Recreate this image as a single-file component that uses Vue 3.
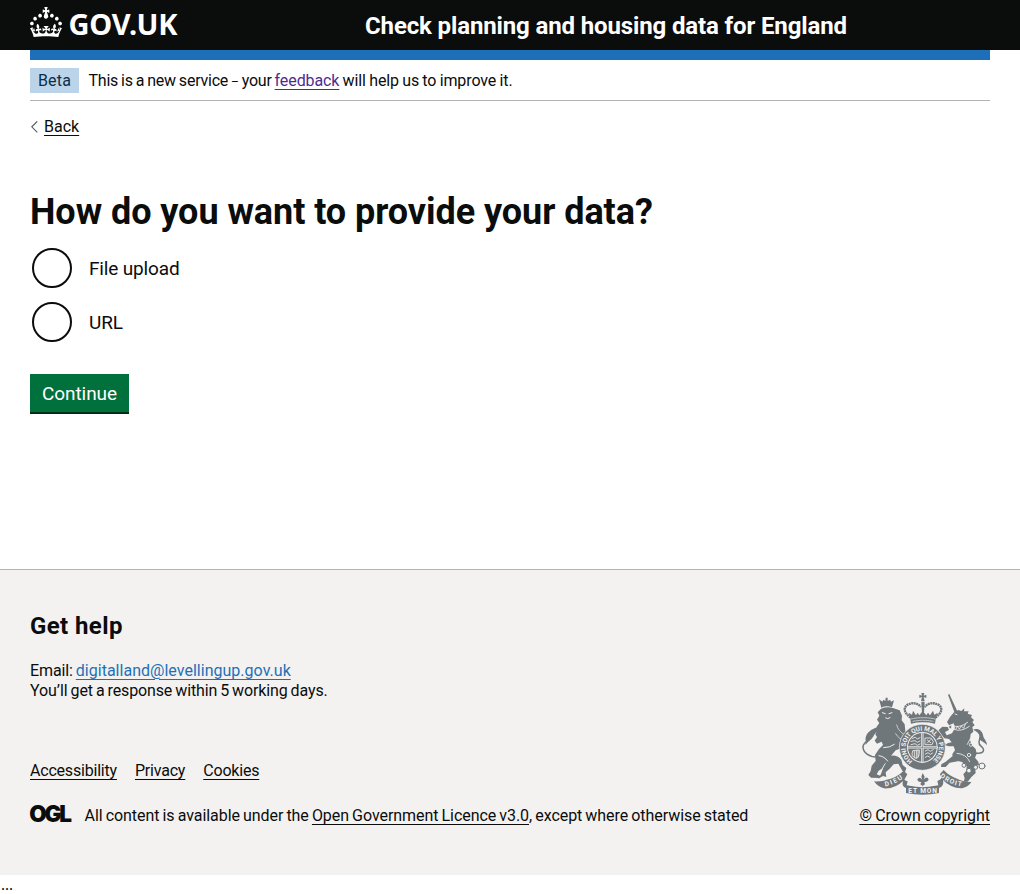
<script setup>
const links = ['Accessibility', 'Privacy', 'Cookies']
const options = ['File upload', 'URL']
</script>

<template>
  <div class="page">
    <header class="header">
      <div class="container header-inner">
        <a class="logo" aria-label="GOV.UK">
          <svg class="crown" viewBox="0 0 32 30" width="32" height="30" fill="#fff">
            <path d="M22.6 10.4c-1 .4-2-.1-2.4-1-.4-.9.1-2 1-2.4.9-.4 2 .1 2.4 1s-.1 2-1 2.4m4.9 3c-1 .4-2-.1-2.4-1-.4-.9.1-2 1-2.4.9-.4 2 .1 2.4 1s0 2-1 2.4m3.3 4.8c-1 .4-2-.1-2.4-1-.4-.9.1-2 1-2.4.9-.4 2 .1 2.4 1s-.1 2-1 2.4M17 4.7l2.3 1.2V2.5l-2.3.7-.2-.2.9-3h-3.4l.9 3-.2.2c-.1.1-2.3-.7-2.3-.7v3.4L15 4.7c.1.1.1.2.2.2l-1.3 4c-.1.2-.1.4-.1.6 0 1.1.8 2 1.9 2.2h.7c1-.2 1.9-1.1 1.9-2.1 0-.2 0-.4-.1-.6l-1.3-4c-.1-.2 0-.2.1-.3m-7.6 5.7c.9.4 2-.1 2.4-1 .4-.9-.1-2-1-2.4-.9-.4-2 .1-2.4 1s0 2 1 2.4m-5 3c.9.4 2-.1 2.4-1 .4-.9-.1-2-1-2.4-.9-.4-2 .1-2.4 1s.1 2 1 2.4m-3.2 4.8c.9.4 2-.1 2.4-1 .4-.9-.1-2-1-2.4-.9-.4-2 .1-2.4 1s0 2 1 2.4m14.8 11c4.4 0 8.6.3 12.3.8 1.1-4.5 2.4-7 3.7-8.8l-2.5-.9c.2 1.3.3 1.9 0 2.7-.4-.4-.8-1.1-1.1-2.3l-1.2 4c.7-.5 1.3-.8 2-.9-1.1 2.5-2.6 3.1-3.5 3-1.1-.2-1.7-1.2-1.5-2.1.3-1.2 1.5-1.5 2.1-.1 1.1-2.3-.8-3-2-2.3 1.9-1.9 2.1-3.5.6-5.6-2.1 1.6-2.1 3.2-1.2 5.5-1.2-1.4-3.2-.6-2.5 1.6.9-1.4 2.1-.5 1.9.8-.2 1.1-1.7 2.1-3.5 1.9-2.7-.2-2.9-2.1-2.9-3.6.7-.1 1.9.5 2.9 1.9l.4-4.3c-1.1 1.1-2.1 1.4-3.2 1.4.4-1.2 2.1-3 2.1-3h-5.4s1.7 1.9 2.1 3c-1.1 0-2.1-.2-3.2-1.4l.4 4.3c1-1.4 2.2-2 2.9-1.9-.1 1.5-.2 3.4-2.9 3.6-1.9.2-3.4-.8-3.5-1.9-.2-1.3 1-2.2 1.9-.8.7-2.3-1.2-3-2.5-1.6.9-2.2.9-3.9-1.2-5.5-1.5 2-1.3 3.7.6 5.6-1.2-.7-3.1 0-2 2.3.6-1.4 1.8-1.1 2.1.1.2.9-.3 1.9-1.5 2.1-.9.2-2.4-.5-3.5-3 .6 0 1.2.3 2 .9l-1.2-4c-.3 1.1-.7 1.9-1.1 2.3-.3-.8-.2-1.4 0-2.7l-2.9.9C1.3 23 2.6 25.5 3.7 30c3.7-.5 7.9-.8 12.3-.8" />
          </svg>
          <span class="logo-text">GOV.UK</span>
        </a>
        <a class="service">Check planning and housing data for England</a>
      </div>
    </header>

    <div class="container">
      <div class="phase">
        <strong class="tag">Beta</strong>
        <span class="phase-text"><span class="intro">This is a new service <span class="dash">–</span> your </span><a class="link visited">feedback</a> will help us to improve it.</span>
      </div>
      <a class="back">
        <svg width="8" height="12" viewBox="0 0 8 12" fill="none" stroke="#505a5f" stroke-width="1.1"><path d="M7.3 .3 1.8 5.8l5.5 5.5" /></svg>
        <span class="link">Back</span>
      </a>
      <main class="main">
        <h1>How do you want to provide your data?</h1>
        <div class="radios">
          <label v-for="o in options" :key="o" class="radio">
            <span class="ring"></span><span class="radio-label">{{ o }}</span>
          </label>
        </div>
        <button class="button">Continue</button>
      </main>
    </div>

    <footer class="footer">
      <div class="container">
        <h2>Get help</h2>
        <p class="help">Email: <a class="link blue">digitalland@levellingup.gov.uk</a><br>You’ll get a response within 5 working days.</p>
        <div class="meta">
          <div>
            <ul class="links">
              <li v-for="l in links" :key="l"><a class="link">{{ l }}</a></li>
            </ul>
            <div class="licence">
              <svg class="ogl" width="44" height="32" viewBox="-1 -6 44 32"><text x="-.8" y="17" textLength="42.8" lengthAdjust="spacing">OGL</text></svg>
              <span class="licence-text">All content is available under the <a class="link">Open Government Licence v3.0</a>, except where otherwise stated</span>
            </div>
          </div>
          <div class="copyright">
            <svg class="arms" width="125" height="102" viewBox="21 24 375 306" fill="#6f777b" stroke-linecap="round" stroke-linejoin="round">
              <defs>
                <path id="garter" d="M173 228A50 50 0 1 1 231 228" />
                <path id="left-motto" d="M91 304Q121 299 149 276" />
                <path id="right-motto" d="M254 275Q284 299 324 305" />
              </defs>
              <!-- lion: tail, crown, head and mane, body, legs -->
              <path fill="none" stroke="#6f777b" stroke-width="4.5" d="M64 216C43 216 24 203 24 185C25 168 46 168 51 153" />
              <path d="M32 168C29 148 44 136 60 129C77 122 83 131 75 137C66 136 61 143 57 151C51 164 40 168 32 180Z" />
              <path d="M72 43L82 50L85 44L91 48L92 38H98L98 48L105 44L108 50L117 46L111 67Q94 60 79 68Z" />
              <path d="M78 71Q98 63 116 70L134 76L141 92L140 106L149 118L151 138L165 158L156 168L157 182L141 184L133 192L122 196L110 210L100 226L88 238L80 251L71 257L65 268L77 273L74 279L48 278L40 270L47 258L50 242L62 228L60 210L72 192L84 180L80 170L66 176L59 167L66 156L61 148L67 136L64 127L73 114L66 104L73 92L68 82Z" />
              <path d="M104 213Q125 208 139 224L143 240L154 249L150 262L142 257L130 236L116 238L104 251L92 262L94 276L84 273L70 281L78 267L84 250Z" />
              <path fill="none" stroke="#f3f2f1" stroke-width="3" d="M82 83L91 86M102 86L111 83M92 99Q98 104 105 98M86 188Q106 188 118 178M72 212Q88 214 98 228" />
              <path fill="none" stroke="#f3f2f1" stroke-width="2" d="M125 120Q130 140 150 150M122 146Q132 164 150 166" />

              <!-- unicorn: horn, head and mane, body, legs, tail, chain -->
              <path d="M279 29L283 27L307 79L299 84Z" />
              <path d="M285 96L297 82L310 75L319 78L328 70L327 79L341 79L338 86L351 90L348 97L357 105L352 111L359 121L352 126L355 140L347 147L345 166L352 182L362 192L365 206L360 218L370 230L372 240L360 244L362 264L350 275L338 290L326 290L329 280L325 268L334 257L335 242L321 231L305 227L293 222L292 207L300 196L296 184L280 184L270 180L279 174L290 172L282 162L268 160L257 148L251 135L262 125L278 126L282 135L270 141L275 151L291 145L300 129L296 115L282 121L276 111Z" />
              <path d="M292 214L309 229L284 233L272 246L258 246L259 238L272 230Z" />
              <path d="M262 168L272 176L268 190L260 182Z" />
              <path fill="none" stroke="#6f777b" stroke-width="4.5" d="M358 203C378 208 390 201 384 190C379 182 371 182 372 171C373 161 381 149 373 140" />
              <path d="M354 134C370 128 382 138 384 150C386 163 398 170 395 180C386 168 370 170 374 154C372 145 365 139 354 134Z" />
              <g fill="none" stroke="#f3f2f1" stroke-width="2.5">
                <path d="M300 87L306 89M293 122Q313 131 338 112M297 133Q318 142 343 124M303 132L307 124L313 132L319 123L326 130L331 117M347 159L337 178M306 205Q334 207 344 230" />
                <circle cx="286" cy="126" r="5" fill="#6f777b" /><circle cx="348" cy="179" r="5" /><circle cx="342" cy="210" r="5" />
              </g>
              <g fill="none" stroke="#6f777b" stroke-width="3">
                <circle cx="327" cy="241" r="6" fill="#f3f2f1" /><circle cx="342" cy="257" r="7" fill="#f3f2f1" /><circle cx="362" cy="247" r="6" fill="#f3f2f1" /><circle cx="381" cy="243" r="9" />
              </g>

              <!-- royal crown -->
              <path d="M199 24H208L206 32L214 29V39L206 36L209 48H198L201 36L193 39V29L201 32Z" />
              <path fill="none" stroke="#6f777b" stroke-width="7" stroke-dasharray="6 1.5" stroke-linecap="butt" d="M167 98Q138 76 156 60Q181 47 198 66M241 98Q270 76 252 60Q226 47 209 66" />
              <path d="M199 50H209L207 86H201ZM166 103L161 83L171 89L174 77L183 91L188 83L193 91L203 78L214 91L219 83L225 91L234 77L238 89L248 83L242 103L240 116Q204 108 168 116Z" />
              <path stroke="#f3f2f1" stroke-width="2" fill="none" d="M168 102Q204 94 240 102M174 109Q204 103 234 109" stroke-dasharray="7 3" />

              <!-- shield within the garter -->
              <circle cx="202" cy="187" r="69" stroke="#f3f2f1" stroke-width="2" />
              <circle cx="202" cy="187" r="46" fill="#f3f2f1" />
              <circle cx="202" cy="187" r="43" />
              <path fill="none" stroke="#f3f2f1" stroke-width="7" d="M202 144V230M159 187H245" />
              <path fill="none" stroke="#6f777b" stroke-width="2" d="M202 144V230M159 187H245" />
              <g fill="none" stroke="#f3f2f1" stroke-width="2.5">
                <path d="M172 160L181 157L187 162L195 158M168 169L180 167L187 172L195 168M168 179L180 176L187 181L195 177M211 159H228L235 170L231 179H211ZM217 165L227 173M227 164L217 174M173 198Q166 215 183 220Q194 219 193 196ZM178 199V216M184 196V219M189 196V216M211 198L219 194L226 199L235 194M211 207L219 203L226 208L233 204M211 217L218 213L225 217" />
              </g>
              <text class="motto"><textPath href="#garter" textLength="248">HONI SOIT QUI MAL Y PENSE</textPath></text>

              <!-- ribbon -->
              <path d="M57 289Q82 290 95 284Q125 278 146 257L157 268L148 284Q121 312 87 310Q68 305 57 289ZM349 291Q321 290 306 281Q280 271 266 255L255 267L260 281Q288 311 321 310Q341 305 349 291Z" />
              <path d="M143 275Q145 285 158 289L155 301Q202 312 250 301L247 288Q261 282 263 274L265 294Q263 306 252 309V324Q203 335 153 324V309Q141 304 143 294Z" />
              <path fill="#f3f2f1" d="M160 274Q202 262 245 274L244 300Q202 309 161 300Z" />
              <path d="M203 264L209 275L206 284Q216 272 221 283Q219 292 208 291L210 298L203 303L196 298L199 291Q188 292 187 283Q193 273 202 284L199 275Z" />
              <text class="motto-big"><textPath href="#left-motto" textLength="58">DIEU</textPath></text>
              <text class="motto-big"><textPath href="#right-motto" textLength="72">DROIT</textPath></text>
              <text class="motto-big" x="160" y="325" textLength="86">ET MON</text>
            </svg>
            <a class="link">© Crown copyright</a>
          </div>
        </div>
      </div>
    </footer>
    <div class="trail">...</div>
  </div>
</template>

<style>
body { margin: 0; background: #fff; }
</style>
<style scoped>
.page { font: 16px/20px Roboto, sans-serif; color: #0b0c0c; }
.container { width: 960px; margin: 0 auto; }
.header { background: #0b0c0c; color: #fff; height: 50px; }
.header-inner { height: 60px; box-sizing: border-box; border-bottom: 10px solid #1d70b8; display: flex; }
.logo { width: 335px; display: flex; padding-top: 7px; box-sizing: border-box; }
.logo-text { font-family: "Noto Sans", sans-serif; font-weight: 700; font-size: 29px; line-height: 34px; margin-left: 6.5px; letter-spacing: -.15px; }
.service { font-weight: 700; font-size: 24px; line-height: 52px; letter-spacing: -.13px; }
.phase { height: 40px; margin-top: 10px; border-bottom: 1px solid #b1b4b6; display: flex; align-items: center; }
.tag { background: #bbd4ea; color: #0c2d4a; font-weight: 400; padding: 0 8px; line-height: 25px; letter-spacing: .15px; }
.phase-text { margin-left: 9.5px; padding-top: 2px; letter-spacing: -.1px; word-spacing: -.6px; }
.intro { letter-spacing: -.23px; word-spacing: -.75px; }
.dash { font-size: 12px; line-height: 1; }
.link { text-decoration: underline; text-decoration-thickness: 1px; text-underline-offset: 2.5px; }
.visited { color: #4c2c92; }
.blue { color: #1d70b8; letter-spacing: .02px; }
.back { display: flex; align-items: center; gap: 6px; margin-top: 16px; }
.main { padding-top: 55px; height: 432px; box-sizing: border-box; }
h1 { margin: 0 0 16px; font-size: 36px; line-height: 40px; letter-spacing: -.05px; }
.radios { padding-left: 2px; display: grid; gap: 14px; }
.radio { display: flex; height: 40px; align-items: center; font-size: 19px; letter-spacing: -.15px; }
.radio-label { padding-top: 2px; }
.ring { width: 40px; height: 40px; box-sizing: border-box; border: 2px solid #0b0c0c; border-radius: 50%; margin-right: 17px; }
.button { margin-top: 32px; border: 0; background: #00703c; color: #fff; font: 19px/38px Roboto, sans-serif; letter-spacing: -.08px; padding: 1px 12px 0; box-shadow: 0 2px #002d18; height: 38px; width: 99px; display: block; }
.footer { background: #f3f2f1; border-top: 1px solid #b1b4b6; height: 305px; }
h2 { margin: 0; font-size: 24px; line-height: 30px; padding-top: 41px; letter-spacing: .4px; }
.help { margin: 20px 0 0; letter-spacing: -.12px; word-spacing: -.85px; }
.meta { display: flex; justify-content: space-between; align-items: flex-end; margin-top: -8px; }
.links { list-style: none; margin: 0 0 25px; padding: 0; display: flex; gap: 18px; letter-spacing: -.2px; }
.licence { display: flex; }
.ogl { margin: -7px 0 -5px -1px; }
.ogl text { font: 900 22.5px Inter, sans-serif; fill: #0b0c0c; }
.licence-text { margin-left: 11.5px; letter-spacing: -.06px; word-spacing: -.78px; }
.copyright { display: flex; flex-direction: column; align-items: center; gap: 11px; letter-spacing: -.04px; word-spacing: -.6px; }
.motto { font: 700 19px Roboto, sans-serif; fill: #f3f2f1; }
.motto-big { font: 700 20px Roboto, sans-serif; fill: #f3f2f1; }
.trail { font: 16px/19px "Liberation Serif", serif; padding-left: 1px; }
</style>
